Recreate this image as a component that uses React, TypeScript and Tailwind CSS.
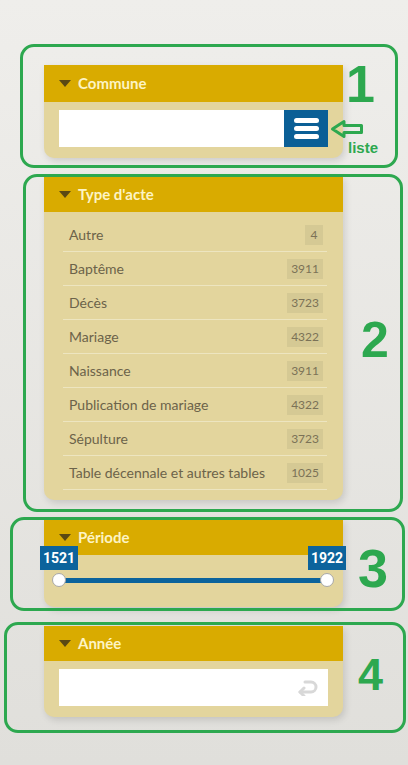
import type { ReactNode } from 'react';

const types = [
  { label: 'Autre', count: 4 },
  { label: 'Baptême', count: 3911 },
  { label: 'Décès', count: 3723 },
  { label: 'Mariage', count: 4322 },
  { label: 'Naissance', count: 3911 },
  { label: 'Publication de mariage', count: 4322 },
  { label: 'Sépulture', count: 3723 },
  { label: 'Table décennale et autres tables', count: 1025 },
];

function Panel({ title, className, headerH, children }: { title: string; className?: string; headerH: string; children: ReactNode }) {
  return (
    <div className={`w-[299px] rounded-b-[10px] bg-[#e3d59d] shadow-[2px_3px_7px_rgba(0,0,0,0.13)] ${className ?? ''}`}>
      <div className={`flex ${headerH} items-center gap-[7px] bg-[#d9ab00] pl-[15px]`}>
        <svg width="12" height="7" viewBox="0 0 12 7">
          <path d="M0 0h12L6 7z" fill="#5a4913" />
        </svg>
        <span className="text-[15px] font-bold text-[#fdf4c4]">{title}</span>
      </div>
      {children}
    </div>
  );
}

function Thumb({ year }: { year: number }) {
  return (
    <div className="relative flex w-[38px] flex-col items-center gap-[3px]">
      <span className="flex h-[24px] w-[38px] items-center justify-center bg-[#0c639c] font-['Roboto',sans-serif] text-[14px] font-bold text-white">
        {year}
      </span>
      <span className="h-[14px] w-[14px] rounded-full border border-[#a8a8a8] bg-white" />
    </div>
  );
}

function Note({ className }: { className: string }) {
  return <div className={`pointer-events-none absolute rounded-[14px] border-[3px] border-[#2da84f] ${className}`} />;
}

export default function App() {
  return (
    <div className="relative h-[765px] overflow-hidden bg-gradient-to-b from-[#efeeeb] to-[#e0dfdb] font-['Lato',sans-serif]">
      <div className="ml-[44px] flex flex-col pt-[65px]">
        <Panel title="Commune" headerH="h-[37px]">
          <div className="px-[15px] pb-[11px] pt-[8px]">
            <div className="flex h-[37px]">
              <div className="flex-1 bg-white" />
              <div className="flex w-[44px] flex-col items-center justify-center gap-[3.5px] bg-[#0b5f96]">
                <span className="h-[4.5px] w-[25px] rounded-full bg-white" />
                <span className="h-[4.5px] w-[25px] rounded-full bg-white" />
                <span className="h-[4.5px] w-[25px] rounded-full bg-white" />
              </div>
            </div>
          </div>
        </Panel>

        <Panel title="Type d'acte" headerH="h-[36px]" className="mt-[18px]">
          <div className="pb-[10px] pl-[19px] pr-[16px] pt-[6px]">
            {types.map((t) => (
              <div key={t.label} className="flex h-[34px] items-center justify-between border-b border-[#ede5c0] pl-[6px] pr-[4px]">
                <span className="text-[14px] text-[#6c634a]">{t.label}</span>
                <span className="flex h-[20px] min-w-[18px] items-center justify-center bg-[#d5c994] px-[4px] text-[12px] text-[#7b7257]">
                  {t.count}
                </span>
              </div>
            ))}
          </div>
        </Panel>

        <Panel title="Période" headerH="h-[36px]" className="mt-[19px]">
          <div className="pb-[20px]">
            <div className="relative -mt-[9px] ml-[-4px] mr-[-3px] flex justify-between">
              <div className="absolute left-[19px] right-[19px] top-[31.5px] h-[5px] bg-[#0c639c]" />
              <Thumb year={1521} />
              <Thumb year={1922} />
            </div>
          </div>
        </Panel>

        <Panel title="Année" headerH="h-[35px]" className="mt-[19px]">
          <div className="px-[15px] pb-[11px] pt-[8px]">
            <div className="flex h-[37px] items-center justify-end bg-white pr-[10px]">
              <svg width="21" height="17" viewBox="0 0 21 17" fill="none" stroke="#d8d8d8" strokeWidth="3" strokeLinecap="round" strokeLinejoin="round">
                <path d="M8 3h6a5 5 0 0 1 0 10H3" />
                <path d="M7 9l-4 4 4 4" />
              </svg>
            </div>
          </div>
        </Panel>
      </div>

      <Note className="left-[20px] top-[44px] h-[124px] w-[378px]" />
      <Note className="left-[23px] top-[174px] h-[338px] w-[380px]" />
      <Note className="left-[10px] top-[517px] h-[94px] w-[395px]" />
      <Note className="left-[4px] top-[622px] h-[111px] w-[402px]" />

      <span className="absolute left-[346px] top-[58px] font-['Liberation_Sans',sans-serif] text-[52px] font-bold leading-none text-[#2da84f]">1</span>
      <span className="absolute left-[361px] top-[315px] font-['Liberation_Sans',sans-serif] text-[50px] font-bold leading-none text-[#2da84f]">2</span>
      <span className="absolute left-[358px] top-[541px] font-['Liberation_Sans',sans-serif] text-[54px] font-bold leading-none text-[#2da84f]">3</span>
      <span className="absolute left-[358px] top-[652px] font-['Liberation_Sans',sans-serif] text-[45px] font-bold leading-none text-[#2da84f]">4</span>

      <svg className="absolute left-[330px] top-[119px]" width="34" height="20" viewBox="0 0 34 20" fill="none" stroke="#2da84f" strokeWidth="3" strokeLinejoin="round">
        <path d="M2.5 10L14 2.5V6.5H31.5V13.5H14V17.5Z" />
      </svg>
      <span className="absolute left-[348px] top-[140px] font-['Liberation_Sans',sans-serif] text-[15px] font-bold leading-none text-[#2da84f]">liste</span>
    </div>
  );
}
